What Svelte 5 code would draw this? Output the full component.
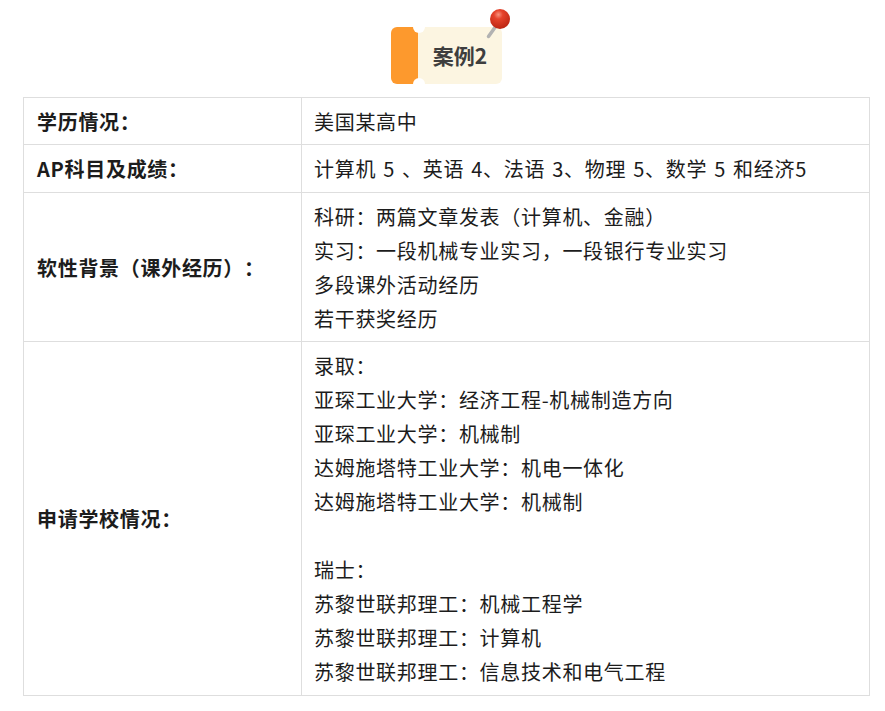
<script>
  const rows = [
    { head: '学历情况：', lines: ['美国某高中'] },
    { head: 'AP科目及成绩：', lines: ['计算机 5 、英语 4、法语 3、物理 5、数学 5 和经济5'] },
    { head: '软性背景（课外经历）：', lines: ['科研：两篇文章发表（计算机、金融）', '实习：一段机械专业实习，一段银行专业实习', '多段课外活动经历', '若干获奖经历'] },
    { head: '申请学校情况：', lines: ['录取：', '亚琛工业大学：经济工程-机械制造方向', '亚琛工业大学：机械制', '达姆施塔特工业大学：机电一体化', '达姆施塔特工业大学：机械制', '', '瑞士：', '苏黎世联邦理工：机械工程学', '苏黎世联邦理工：计算机', '苏黎世联邦理工：信息技术和电气工程'] }
  ];
</script>

<div class="page">
  <div class="title">
    <div class="badge">
      <div class="tab"></div>
      <div class="label">案例2</div>
      <span class="notch top"></span>
      <span class="notch bottom"></span>
      <svg class="pin" width="30" height="36" viewBox="0 0 30 36">
        <defs>
          <radialGradient id="ball" cx="0.42" cy="0.28" r="0.8">
            <stop offset="0" stop-color="#f6937f" />
            <stop offset="0.28" stop-color="#e6432c" />
            <stop offset="1" stop-color="#b5200f" />
          </radialGradient>
        </defs>
        <line x1="3.5" y1="29.5" x2="11" y2="19" stroke="#b2b2b2" stroke-width="3.5" stroke-linecap="round" />
        <circle cx="15" cy="12" r="10" fill="url(#ball)" />
      </svg>
    </div>
  </div>

  <table>
    <tbody>
      {#each rows as row}
        <tr>
          <th>{row.head}</th>
          <td>
            {#each row.lines as line}
              <p>{line || '\u00a0'}</p>
            {/each}
          </td>
        </tr>
      {/each}
    </tbody>
  </table>
</div>

<style>
  :global(body) {
    margin: 0;
    background: #fff;
  }
  .page {
    width: 885px;
    height: 711px;
    overflow: hidden;
    box-sizing: border-box;
    padding: 27px 15px 0 23px;
    font-family: "Noto Sans CJK SC", "Noto Sans", sans-serif;
  }
  .title {
    display: flex;
    justify-content: center;
    height: 70px;
  }
  .badge {
    position: relative;
    display: flex;
    width: 111px;
    height: 57px;
  }
  .tab {
    width: 27px;
    background: #fd992d;
    border-radius: 6px 0 0 6px;
  }
  .label {
    flex: 1;
    display: flex;
    align-items: center;
    justify-content: center;
    padding-bottom: 2px;
    box-sizing: border-box;
    background: #fcf5e1;
    border-radius: 0 6px 6px 0;
    font-size: 21px;
    font-weight: 700;
    color: #3e3e3e;
  }
  .notch {
    position: absolute;
    left: 22px;
    width: 12px;
    height: 12px;
    border-radius: 50%;
    background: #fff;
  }
  .notch.top { top: -6px; }
  .notch.bottom { bottom: -6px; }
  .pin {
    position: absolute;
    left: 94px;
    top: -20px;
  }
  table {
    width: 847px;
    border-collapse: collapse;
    table-layout: fixed;
    font-size: 20px;
    letter-spacing: 0.7px;
    word-spacing: 1.9px;
    text-spacing-trim: space-all;
    color: #1c1c1c;
  }
  th, td {
    border: 1px solid #dedede;
    padding: 6.7px 12px 5.75px;
    text-align: left;
    vertical-align: middle;
    line-height: 34px;
  }
  th {
    width: 252px;
    padding-left: 13px;
    font-weight: 700;
  }
  p {
    margin: 0;
  }
</style>
